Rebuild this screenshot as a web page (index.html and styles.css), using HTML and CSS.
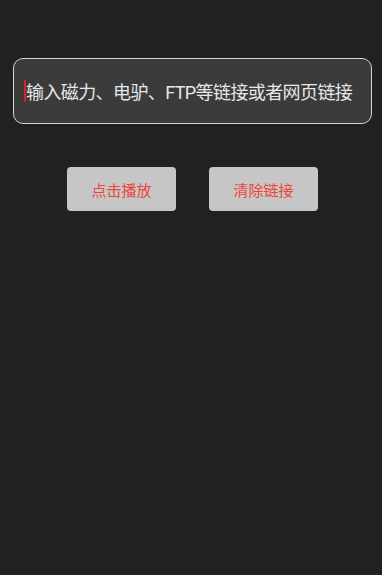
FILE: index.html
```html
<!DOCTYPE html>
<html lang="zh">
<head>
<meta charset="utf-8">
<link rel="stylesheet" href="styles.css">
</head>
<body>
<div class="page">
  <div class="input-box">
    <span class="cursor"></span><span class="placeholder">输入磁力、电驴、FTP等链接或者网页链接</span>
  </div>
  <div class="buttons">
    <button class="btn">点击播放</button>
    <button class="btn">清除链接</button>
  </div>
</div>
</body>
</html>
```

FILE: styles.css
```css
html, body {
  margin: 0;
  padding: 0;
  background: #212121;
  width: 382px;
  height: 575px;
  overflow: hidden;
  font-family: "Roboto", "Noto Sans CJK SC", sans-serif;
}
.page {
  padding: 58px 10px 0 13px;
  display: flex;
  flex-direction: column;
}
.input-box {
  box-sizing: border-box;
  width: 359px;
  height: 66px;
  border: 1.5px solid #d4d4d4;
  border-radius: 10px;
  background: #3b3b3b;
  display: flex;
  align-items: center;
  padding-left: 10px;
}
.cursor {
  display: inline-block;
  width: 2px;
  height: 22px;
  background: #e0201a;
}
.placeholder {
  color: #e8e8e8;
  font-size: 18px;
  white-space: nowrap;
  letter-spacing: -0.6px;
}
.buttons {
  display: flex;
  gap: 33px;
  margin-top: 43px;
  padding-left: 54px;
}
.btn {
  width: 109px;
  height: 44px;
  border: none;
  border-radius: 4px;
  background: #c6c6c6;
  color: #f0443a;
  font-family: "Roboto", "Noto Sans CJK SC", sans-serif;
  font-size: 15px;
  padding: 0;
}
```
